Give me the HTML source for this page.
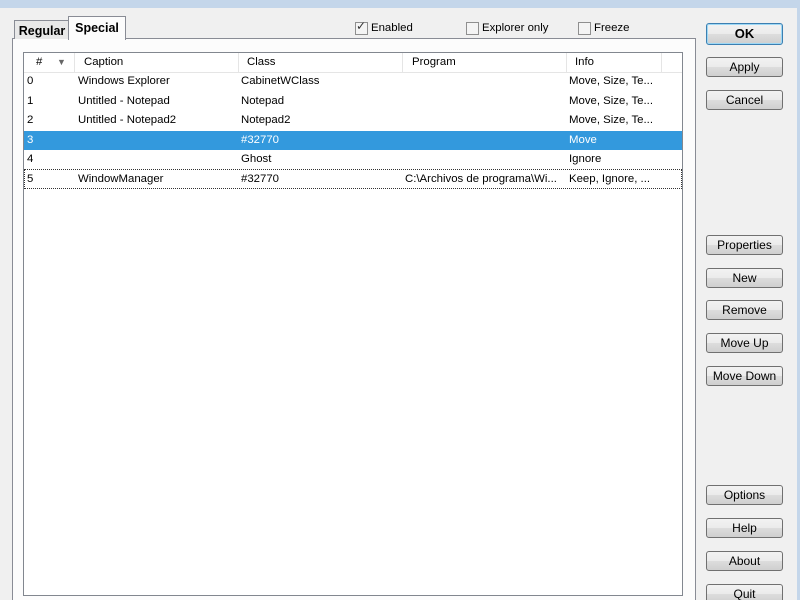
<!DOCTYPE html>
<html><head><style>
html,body{margin:0;width:800px;height:600px;overflow:hidden}
body{background:#f0f0f0;font-family:"Liberation Sans",sans-serif;font-size:11.4px;color:#000;position:relative}
.abs{position:absolute}
.title{left:0;top:0;width:800px;height:8px;background:#c4d6ea}
.btn{position:absolute;left:706px;width:77px;height:20px;border:1px solid #707070;border-radius:3px;background:linear-gradient(#f2f2f2,#ebebeb 50%,#dddddd 50%,#cfcfcf);text-align:center;line-height:19px;font-size:12px;box-sizing:border-box}
.panel{left:12px;top:38px;width:682px;height:570px;border:1px solid #898c95;background:#fcfcfc}
.list{left:23px;top:52px;width:658px;height:542px;border:1px solid #82878f;background:#fff}
.hdr{position:absolute;top:0;left:0;width:658px;height:19px;border-bottom:1px solid #e5e5e5;background:#fff}
.hdr span,.row span{position:absolute;top:0}
.sep{position:absolute;top:0;width:1px;height:19px;background:#e5e5e5}
.row{position:absolute;left:0;width:658px;height:19px;line-height:19px}
.cb{position:absolute;width:11px;height:11px;border:1px solid #8f8f8f;background:#f4f4f4}
</style></head><body>
<div class="abs title"></div>
<div class="abs" style="left:797px;top:0;width:3px;height:600px;background:#c4d6ea"></div>
<div class="abs panel"></div>
<div class="abs" style="left:14px;top:20px;width:54px;height:18px;border:1px solid #898c95;border-bottom:none;background:#e8e8e8;font-weight:bold;font-size:12.5px;line-height:20px;text-align:center">Regular</div>
<div class="abs" style="left:68px;top:16px;width:56px;height:23px;border:1px solid #898c95;border-bottom:none;background:#fcfcfc;font-weight:bold;font-size:12.5px;line-height:22px;text-align:center">Special</div>
<div class="cb" style="left:355px;top:22px"></div><div class="abs" style="left:356px;top:19px;font-size:12px;color:#333">✓</div>
<div class="abs" style="left:371px;top:22px">Enabled</div>
<div class="cb" style="left:466px;top:22px"></div><div class="abs" style="left:482px;top:22px">Explorer only</div>
<div class="cb" style="left:578px;top:22px"></div><div class="abs" style="left:594px;top:22px">Freeze</div>
<div class="abs list">
<div class="hdr" style="line-height:19px">
<span style="left:12px">#</span><span style="left:33px;font-size:9px;color:#666">▼</span>
<div class="sep" style="left:50px"></div><span style="left:60px">Caption</span>
<div class="sep" style="left:214px"></div><span style="left:223px">Class</span>
<div class="sep" style="left:378px"></div><span style="left:388px">Program</span>
<div class="sep" style="left:542px"></div><span style="left:551px">Info</span>
<div class="sep" style="left:637px"></div>
</div>
<div class="row" style="top:19px"><span style="left:3px">0</span><span style="left:54px">Windows Explorer</span><span style="left:217px">CabinetWClass</span><span style="left:545px">Move, Size, Te...</span></div>
<div class="row" style="top:38.5px"><span style="left:3px">1</span><span style="left:54px">Untitled - Notepad</span><span style="left:217px">Notepad</span><span style="left:545px">Move, Size, Te...</span></div>
<div class="row" style="top:58px"><span style="left:3px">2</span><span style="left:54px">Untitled - Notepad2</span><span style="left:217px">Notepad2</span><span style="left:545px">Move, Size, Te...</span></div>
<div class="row" style="top:77.5px;background:#3399dd;color:#fff"><span style="left:3px">3</span><span style="left:217px">#32770</span><span style="left:545px">Move</span></div>
<div class="row" style="top:97px"><span style="left:3px">4</span><span style="left:217px">Ghost</span><span style="left:545px">Ignore</span></div>
<div class="row" style="top:116px;border:1px dotted #333;box-sizing:border-box;height:20px;line-height:18px"><span style="left:2px">5</span><span style="left:53px">WindowManager</span><span style="left:216px">#32770</span><span style="left:380px">C:\Archivos de programa\Wi...</span><span style="left:544px">Keep, Ignore, ...</span></div>
</div>
<div class="btn" style="top:23px;height:22px;line-height:20px;font-weight:bold;font-size:13px;border-color:#3c7fb1;box-shadow:inset 0 0 0 1px #9ed8f5">OK</div>
<div class="btn" style="top:57px">Apply</div>
<div class="btn" style="top:90px">Cancel</div>
<div class="btn" style="top:235px">Properties</div>
<div class="btn" style="top:268px">New</div>
<div class="btn" style="top:300px">Remove</div>
<div class="btn" style="top:333px">Move Up</div>
<div class="btn" style="top:366px">Move Down</div>
<div class="btn" style="top:485px">Options</div>
<div class="btn" style="top:518px">Help</div>
<div class="btn" style="top:551px">About</div>
<div class="btn" style="top:584px">Quit</div>
</body></html>
